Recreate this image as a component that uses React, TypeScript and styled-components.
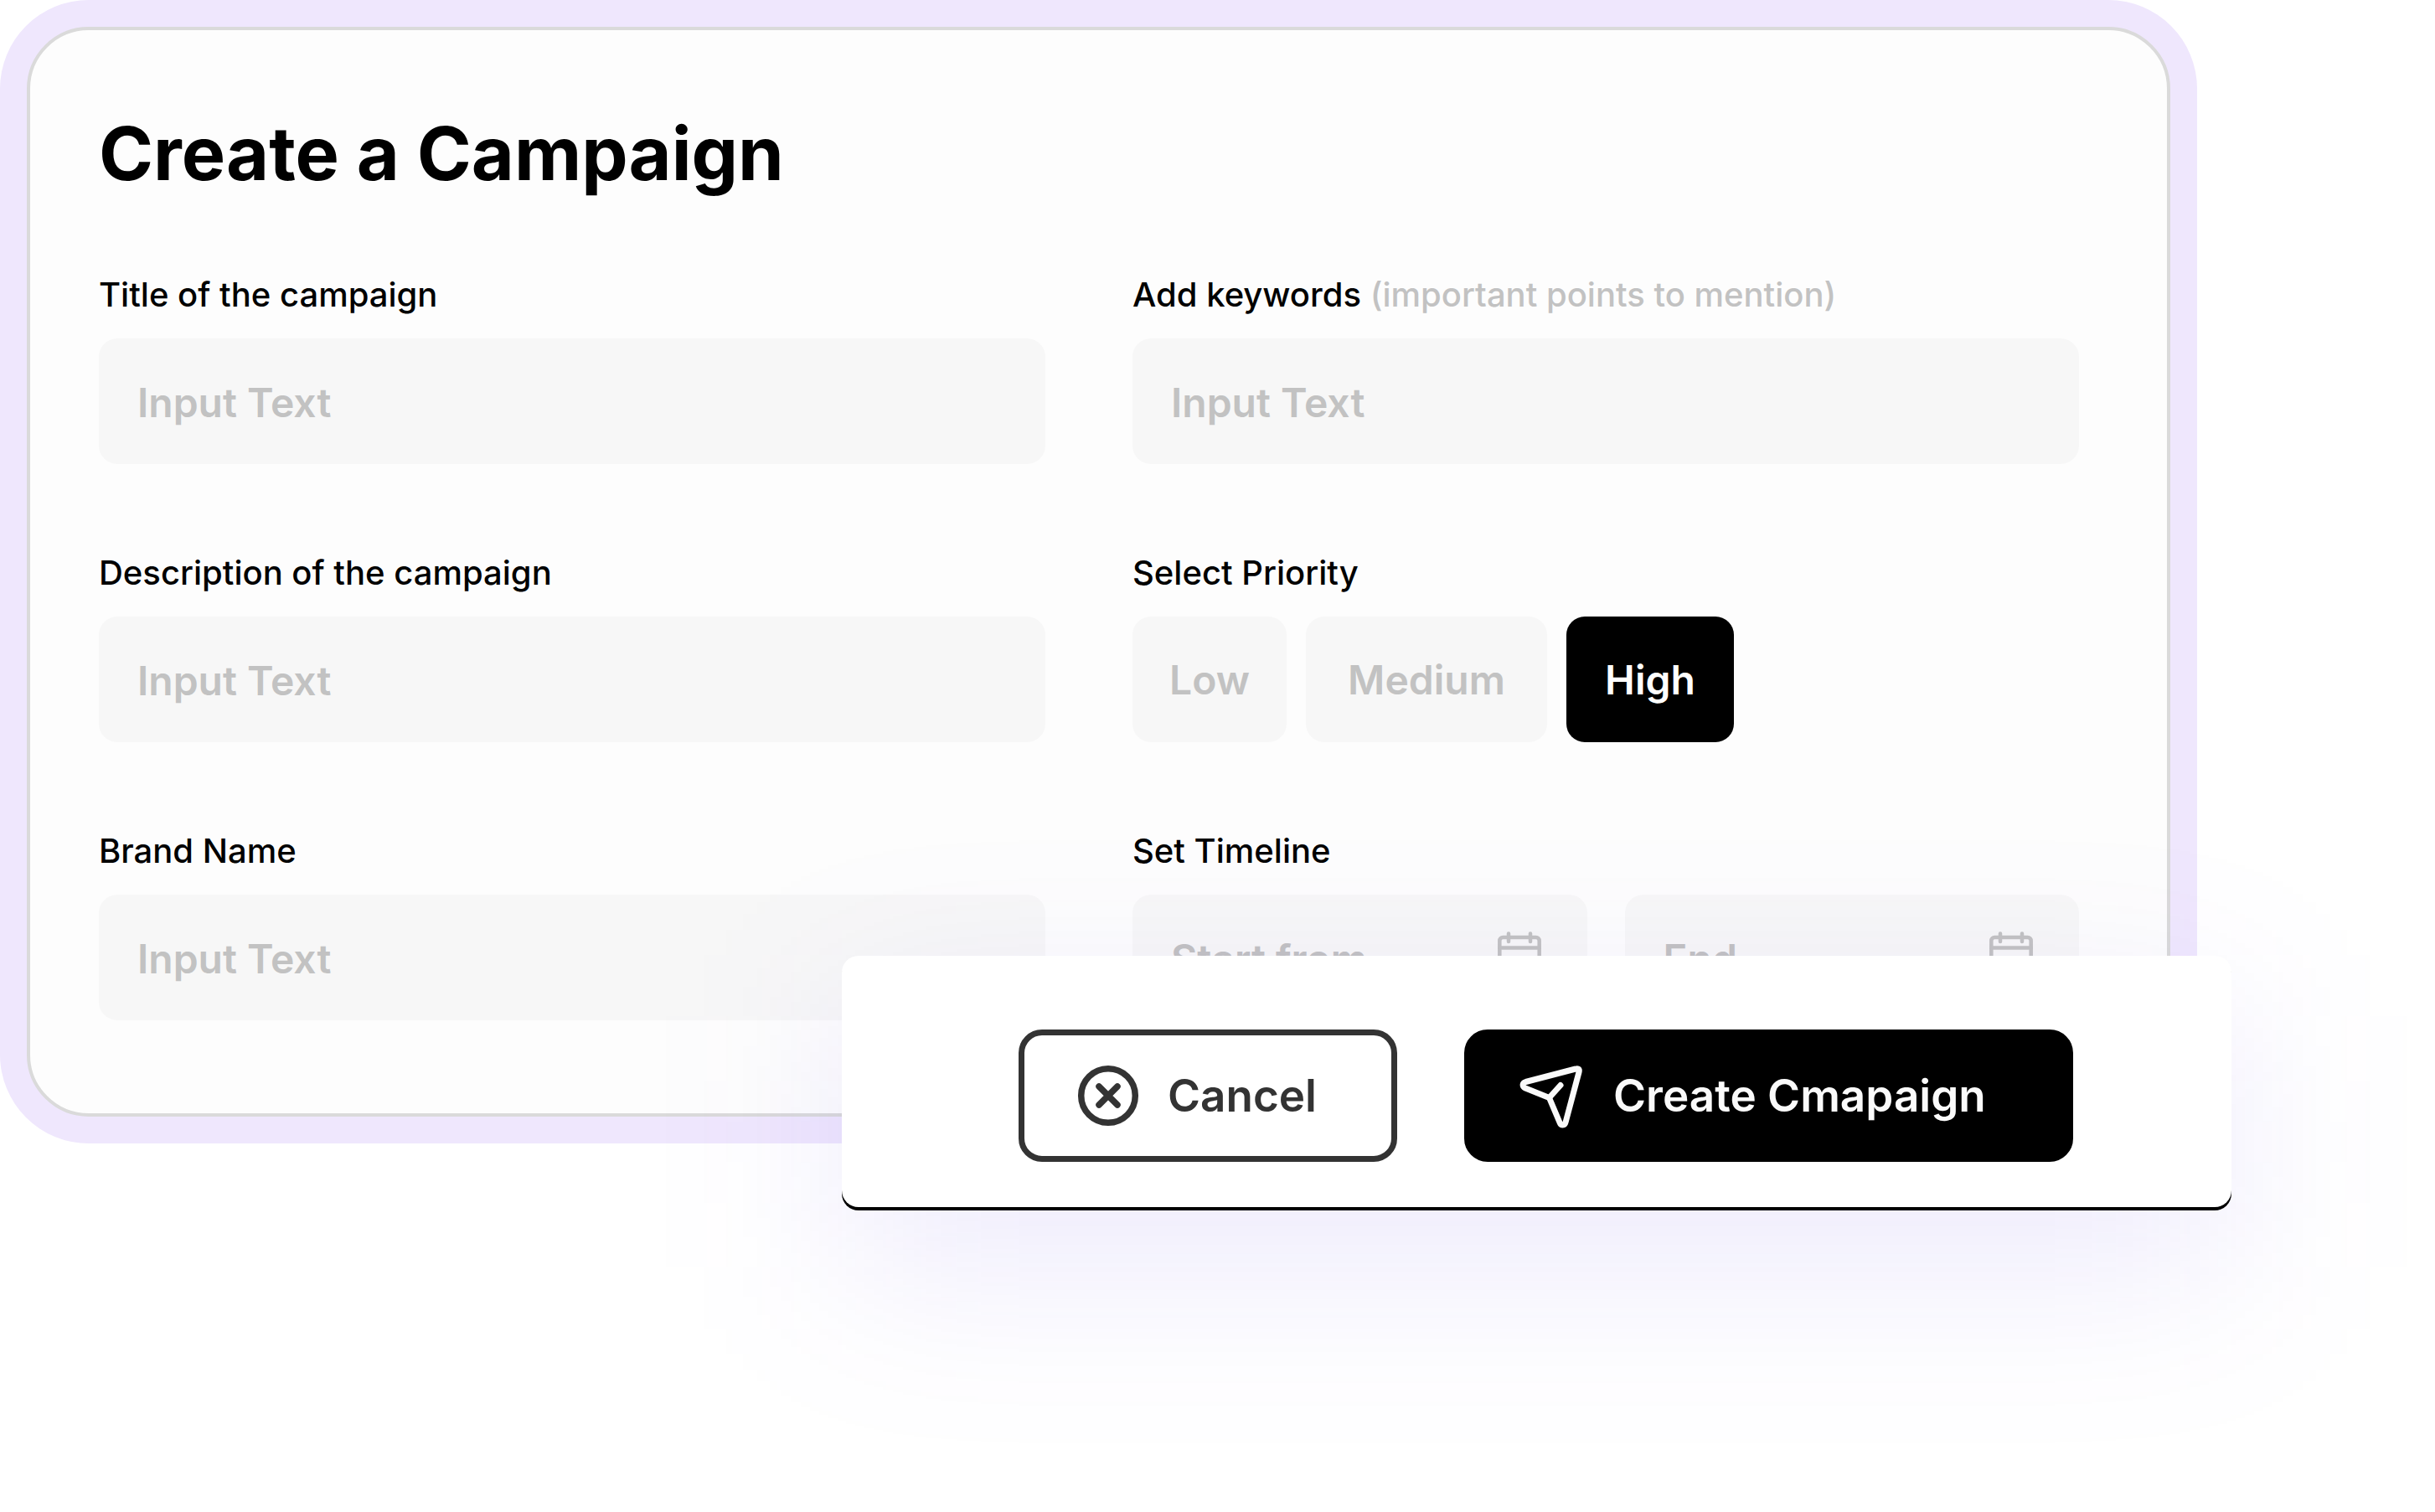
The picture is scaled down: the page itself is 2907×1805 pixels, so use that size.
import React, { useState } from "react";
import styled, { createGlobalStyle, css } from "styled-components";

const GlobalStyle = createGlobalStyle`
  *, *::before, *::after { box-sizing: border-box; }
  body {
    margin: 0;
    background: #fff;
    color: #000;
    font-family: Inter, "Liberation Sans", sans-serif;
  }
  button, input { font: inherit; }
`;

const Page = styled.main`
  min-height: 100vh;
  padding: 0 284px 240px 0;
  overflow: hidden;
`;

const Stage = styled.form`
  position: relative;
`;

const Frame = styled.div`
  padding: 32px;
  border-radius: 106px;
  background: #efe7fd;
`;

const Card = styled.section`
  padding: 95px 105px 111px 82px;
  border: 4px solid #dadada;
  border-radius: 74px;
  background: #fdfdfd;
`;

const Title = styled.h1`
  margin: 0 0 93px;
  font-size: 88px;
  font-weight: 700;
  line-height: 104px;
`;

const Fields = styled.div`
  display: grid;
  grid-template-columns: 1fr 1fr;
  gap: 106px 104px;
`;

const Field = styled.div`
  display: flex;
  flex-direction: column;
  gap: 28px;
  min-width: 0;
`;

const labelText = css`
  font-size: 40px;
  font-weight: 500;
  line-height: 48px;
`;

const Label = styled.label`
  ${labelText}
`;

const GroupLabel = styled.span`
  ${labelText}
`;

const Hint = styled.span`
  color: #c2c2c2;
`;

const control = css`
  padding: 48px 46px 46px;
  border: 0;
  border-radius: 22px;
  background: #f7f7f7;
  color: #c2c2c2;
  font-size: 48px;
  font-weight: 600;
  line-height: 56px;
`;

const TextInput = styled.input`
  ${control}
  width: 100%;
  height: 150px;
  &::placeholder { color: #c2c2c2; opacity: 1; }
`;

const Chips = styled.div`
  display: grid;
  grid-template-columns: 184px 288px 200px;
  gap: 23px;
`;

const Chip = styled.label<{ $active: boolean }>`
  ${control}
  position: relative;
  padding-right: 0;
  padding-left: 0;
  text-align: center;
  cursor: pointer;
  ${(p) => p.$active && css`
    background: #000;
    color: #fff;
  `}
`;

const ChipRadio = styled.input`
  position: absolute;
  inset: 0;
  width: 100%;
  height: 100%;
  margin: 0;
  opacity: 0;
`;

const DateRow = styled.div`
  display: grid;
  grid-template-columns: 1fr 1fr;
  gap: 45px;
`;

const DateBox = styled.div`
  display: flex;
  align-items: center;
  padding-right: 55px;
  border-radius: 22px;
  background: #f7f7f7;
`;

const DateInput = styled(TextInput)`
  flex: 1;
  min-width: 0;
  background: transparent;
`;

const Dock = styled.footer`
  position: absolute;
  right: -41px;
  bottom: -76px;
  isolation: isolate;

  &::before {
    content: "";
    position: absolute;
    inset: 72px 0 -72px;
    z-index: -1;
    background: rgba(80, 48, 229, 0.1);
    filter: blur(110px);
  }
`;

const Actions = styled.div`
  display: grid;
  grid-template-columns: 452px 727px;
  gap: 80px;
  padding: 88px 189px 54px 211px;
  border-radius: 20px;
  background: #fff;
  box-shadow: 0 4px 0 #000;
`;

const ActionButton = styled.button<{ $primary?: boolean }>`
  display: flex;
  align-items: center;
  gap: 32px;
  padding: 32px 0 32px 59px;
  border: 7px solid ${(p) => (p.$primary ? "#000" : "#333")};
  border-radius: 28px;
  background: ${(p) => (p.$primary ? "#000" : "#fff")};
  color: ${(p) => (p.$primary ? "#fafafa" : "#333")};
  font-size: 53px;
  font-weight: 600;
  line-height: 80px;
  white-space: nowrap;
  cursor: pointer;
`;

const CalendarIcon = () => (
  <svg width="52" height="62" viewBox="0 0 52 62" fill="none" stroke="#c2c2c2" strokeWidth="4.500" strokeLinecap="round" aria-hidden="true">
    <rect x="2.300" y="7" width="47.400" height="50" rx="4" />
    <path d="M2 19.500H50" />
    <path d="M13 2.500V12M39 2.500V12" />
  </svg>
);

const CancelIcon = () => (
  <svg width="80" height="80" viewBox="0 0 80 80" fill="none" stroke="currentColor" strokeWidth="7.500" strokeLinecap="round" aria-hidden="true">
    <circle cx="41" cy="40" r="32.300" />
    <path d="M30 29L52 51M52 29L30 51" />
  </svg>
);

const SendIcon = () => (
  <svg width="80" height="80" viewBox="0 -3 80 80" fill="none" stroke="currentColor" strokeWidth="7" strokeLinecap="round" strokeLinejoin="round" aria-hidden="true">
    <path d="M67 5L7.500 20.500C3 21.800 3 26 7 28L35.500 39.500L48 69C49.500 73 54 73 55 69L71 9C72 5.500 70.500 4 67 5Z" />
    <path d="M35.500 39.500L49 24.500" />
  </svg>
);

type TextFieldProps = { id: string; label: string; hint?: string };

const TextField = ({ id, label, hint }: TextFieldProps) => (
  <Field>
    <Label htmlFor={id}>
      {label}
      {hint && <Hint> {hint}</Hint>}
    </Label>
    <TextInput id={id} type="text" placeholder="Input Text" />
  </Field>
);

const priorities = ["Low", "Medium", "High"];

const PriorityField = () => {
  const [selected, setSelected] = useState("High");
  return (
    <Field role="radiogroup" aria-labelledby="priority">
      <GroupLabel id="priority">Select Priority</GroupLabel>
      <Chips>
        {priorities.map((name) => (
          <Chip key={name} $active={name === selected}>
            <ChipRadio
              type="radio"
              name="priority"
              value={name}
              checked={name === selected}
              onChange={() => setSelected(name)}
            />
            {name}
          </Chip>
        ))}
      </Chips>
    </Field>
  );
};

const TimelineField = () => (
  <Field role="group" aria-labelledby="timeline">
    <GroupLabel id="timeline">Set Timeline</GroupLabel>
    <DateRow>
      {["Start from", "End"].map((name) => (
        <DateBox key={name}>
          <DateInput type="text" placeholder={name} aria-label={name} />
          <CalendarIcon />
        </DateBox>
      ))}
    </DateRow>
  </Field>
);

export default function App() {
  return (
    <>
      <GlobalStyle />
      <Page>
        <Stage onSubmit={(e) => e.preventDefault()}>
          <Frame>
            <Card>
              <Title>Create a Campaign</Title>
              <Fields>
                <TextField id="title" label="Title of the campaign" />
                <TextField id="keywords" label="Add keywords" hint="(important points to mention)" />
                <TextField id="description" label="Description of the campaign" />
                <PriorityField />
                <TextField id="brand" label="Brand Name" />
                <TimelineField />
              </Fields>
            </Card>
          </Frame>
          <Dock>
            <Actions>
              <ActionButton type="button">
                <CancelIcon />
                Cancel
              </ActionButton>
              <ActionButton type="submit" $primary>
                <SendIcon />
                Create Cmapaign
              </ActionButton>
            </Actions>
          </Dock>
        </Stage>
      </Page>
    </>
  );
}
